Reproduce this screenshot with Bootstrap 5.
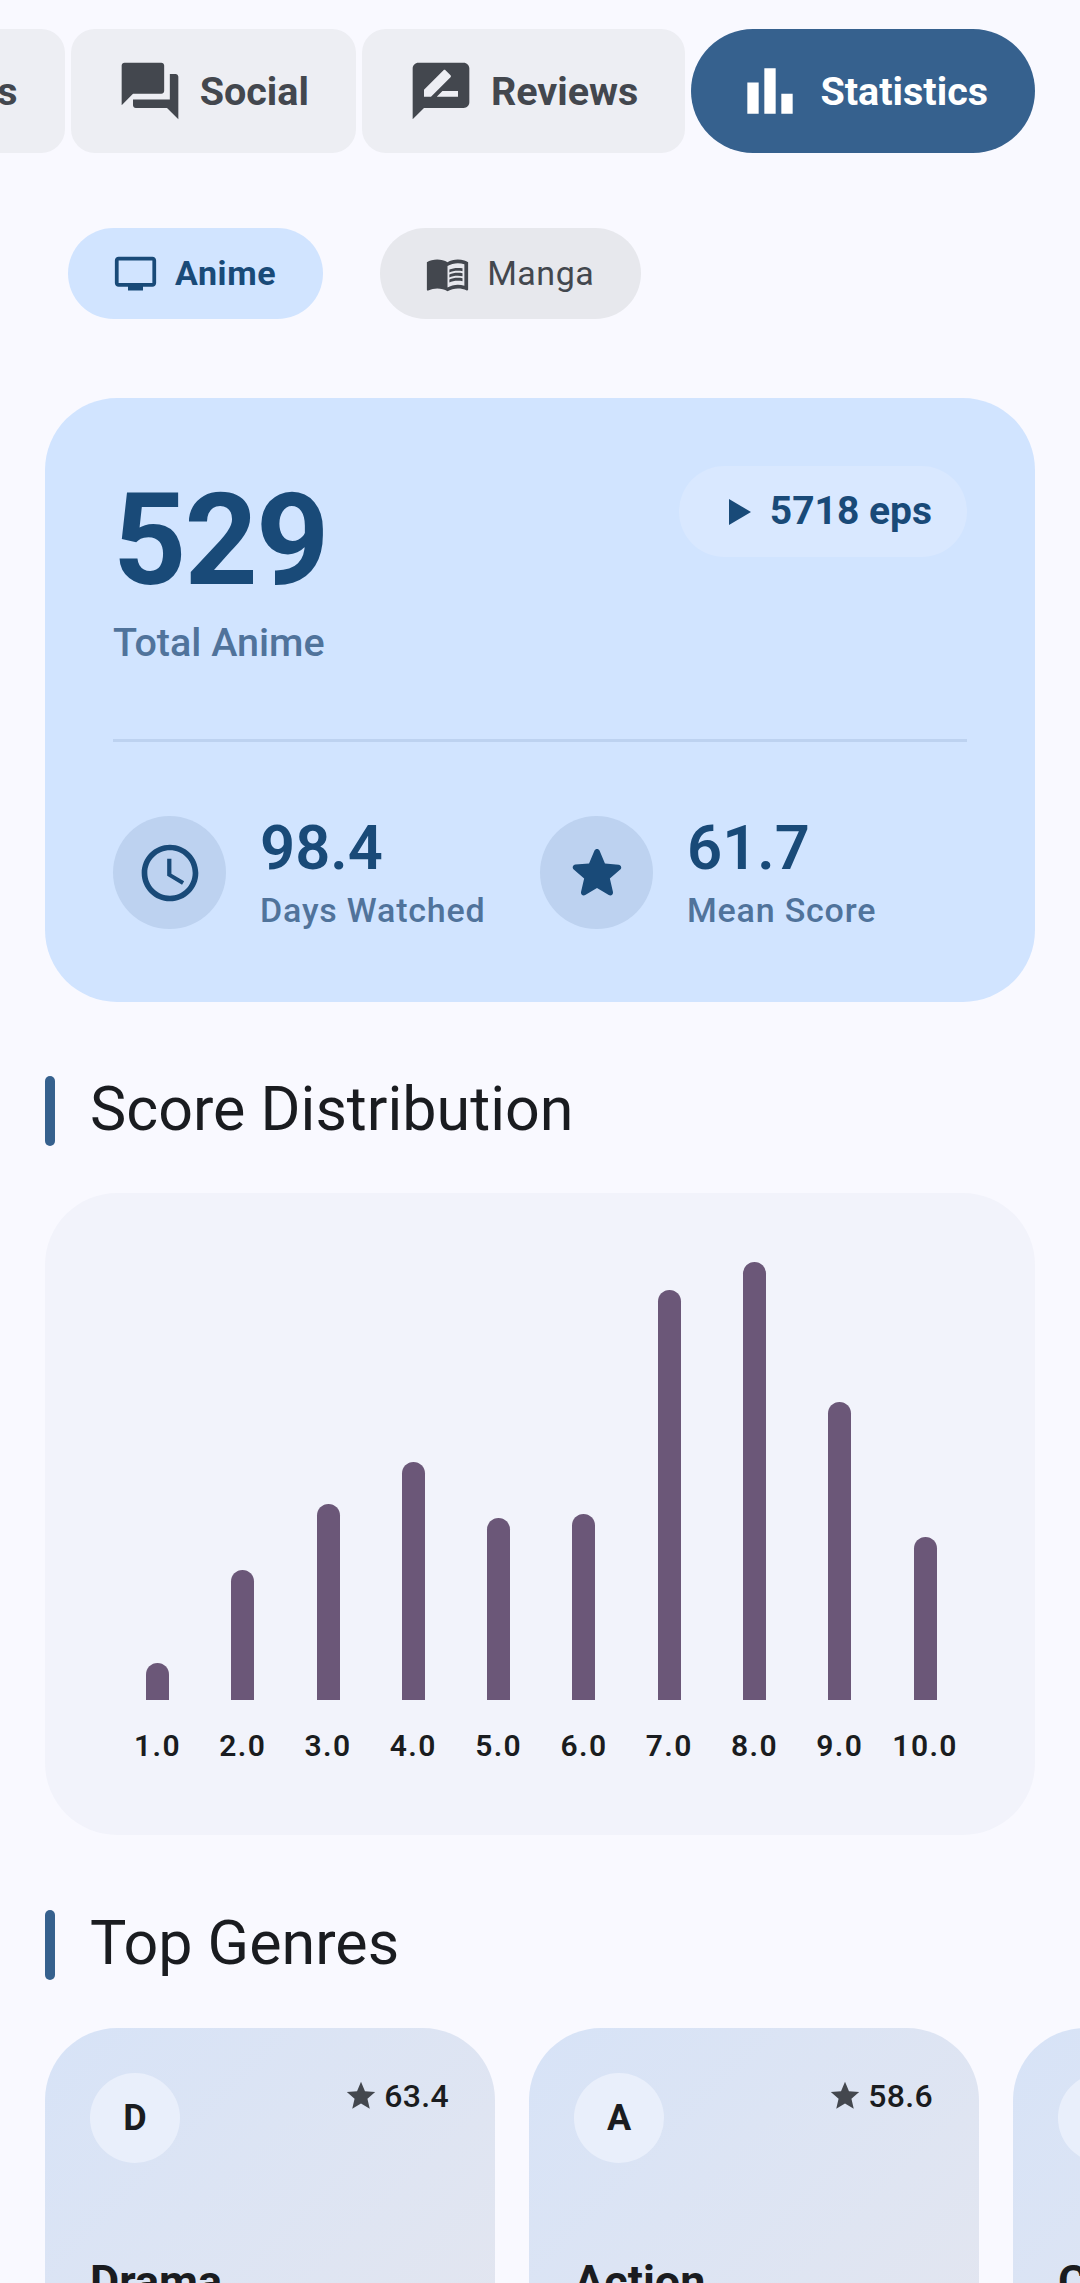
<!DOCTYPE html>
<html lang="en">
<head>
  <meta charset="UTF-8">
  <title>Statistics</title>
  <link href="https://cdn.jsdelivr.net/npm/bootstrap@5.3.3/dist/css/bootstrap.min.css" rel="stylesheet">
  <style>
    body { background: #f9f9ff; font-family: Roboto, "Liberation Sans", sans-serif; color: #1a1c20; width: 1080px; height: 2283px; overflow: hidden; }
    .tab-strip { padding: 29px 45px 0 0; gap: 6px; }
    .tab-pill { flex: none; height: 124px; border-radius: 24px; background: #edeef3; color: #43474e; font-size: 39.5px; font-weight: 700; gap: 16px; padding: 0 47px 0 45px; white-space: nowrap; }
    .tab-pill span { margin-top: 2px; }
    .tab-pill.tab-on { background: #36618e; color: #fff; border-radius: 62px; }
    .tab-pill svg { width: 68px; height: 68px; fill: currentColor; flex: none; }
    .media-row { padding: 75px 0 0 68px; gap: 57px; }
    .media-chip { height: 91px; border-radius: 46px; background: #e7e8ed; color: #43474e; font-size: 34px; letter-spacing: .5px; gap: 17px; padding: 0 47px 0 45px; }
    .media-chip.chip-on { background: #d1e4ff; color: #194a78; font-weight: 700; letter-spacing: .6px; }
    .media-chip svg { width: 45px; height: 45px; fill: currentColor; flex: none; }
    .total-panel { margin: 79px 45px 0; height: 604px; border-radius: 72px; background: #d1e4ff; padding: 68px; color: #194a78; }
    .total-num { font-size: 128px; font-weight: 700; line-height: 1; letter-spacing: -2px; margin-top: 10px; }
    .total-cap { font-size: 39.5px; font-weight: 500; color: #50739b; line-height: 40px; margin-top: 19px; }
    .eps-pill { height: 91px; border-radius: 46px; background: #d9e8ff; font-size: 39px; font-weight: 700; padding: 0 35px 0 50px; gap: 19px; }
    .total-rule { height: 3px; background: #bdd2f0; margin-top: 76px; }
    .total-stats { margin-top: 74px; gap: 35px; }
    .stat-disc { width: 113px; height: 113px; border-radius: 50%; background: #bdd2f0; flex: none; }
    .stat-item { width: 392px; gap: 34px; }
    .stat-num { font-size: 61.5px; font-weight: 600; line-height: 1; }
    .stat-cap { font-size: 34px; font-weight: 500; letter-spacing: .8px; color: #50739b; line-height: 1; margin-top: 14px; }
    .sect-head { margin: 0 45px; gap: 35px; height: 70px; }
    .sect-head::before { content: ""; width: 10px; height: 70px; border-radius: 5px; background: #36618e; }
    .sect-label { font-size: 61px; line-height: 70px; font-weight: 400; margin-top: -4px; }
    .mt-score { margin-top: 74px; }
    .mt-genre { margin-top: 75px; }
    .chart-panel { margin: 47px 45px 0; height: 642px; border-radius: 72px; background: #f2f3fb; padding: 68px 54px 0 69.8px; }
    .bar-plot { height: 439px; }
    .bar-col { width: 23px; border-radius: 12px 12px 0 0; background: #6b5778; }
    .bar-slot { width: 85.3px; flex: none; }
    .bar-name { font-size: 30px; font-weight: 600; letter-spacing: 1.4px; text-align: center; margin-top: 28px; line-height: 36px; }
    .genre-row { margin: 48px 0 0 45px; gap: 34px; }
    .genre-tile { width: 450px; height: 400px; flex: none; border-radius: 72px; padding: 45px; background: linear-gradient(135deg, #d7e3f7, #e4e6ef); }
    .genre-disc { width: 90px; height: 90px; border-radius: 50%; background: #e9effb; font-size: 36px; font-weight: 700; }
    .genre-score { font-size: 32px; font-weight: 500; letter-spacing: .3px; gap: 6px; margin-top: -1px; padding-right: 1px; }
    .genre-score svg { width: 34px; height: 34px; fill: #43474e; }
    .genre-name { font-size: 45px; font-weight: 700; margin-top: 85px; }
  </style>
</head>
<body>
  <div class="d-flex justify-content-end tab-strip">
    <div class="d-flex align-items-center tab-pill"><span>s</span></div>
    <div class="d-flex align-items-center tab-pill">
      <svg viewBox="0 0 24 24"><path d="M21 6h-2v9H6v2c0 .55.45 1 1 1h11l4 4V7c0-.55-.45-1-1-1zm-4 6V3c0-.55-.45-1-1-1H3c-.55 0-1 .45-1 1v14l4-4h10c.55 0 1-.45 1-1z"/></svg>
      <span>Social</span>
    </div>
    <div class="d-flex align-items-center tab-pill">
      <svg viewBox="0 0 24 24"><path d="M20 2H4c-1.1 0-2 .9-2 2v18l4-4h14c1.1 0 2-.9 2-2V4c0-1.1-.9-2-2-2zM6 14v-2.47l6.88-6.88c.2-.2.51-.2.71 0l1.77 1.77c.2.2.2.51 0 .71L8.47 14H6zm12 0h-7.5l2-2H18v2z"/></svg>
      <span>Reviews</span>
    </div>
    <div class="d-flex align-items-center tab-pill tab-on">
      <svg viewBox="0 0 24 24"><path d="M4 9h4v11H4zM10 4h4v16h-4zM16 13h4v7h-4z"/></svg>
      <span>Statistics</span>
    </div>
  </div>

  <div class="d-flex media-row">
    <div class="d-flex align-items-center media-chip chip-on">
      <svg viewBox="0 0 24 24"><path d="M21 3H3c-1.1 0-2 .9-2 2v12c0 1.1.9 2 2 2h5v2h8v-2h5c1.1 0 2-.9 2-2V5c0-1.1-.9-2-2-2zm0 14H3V5h18v12z"/></svg>
      Anime
    </div>
    <div class="d-flex align-items-center media-chip">
      <svg viewBox="0 0 24 24"><path d="M21 5c-1.11-.35-2.33-.5-3.5-.5-1.95 0-4.05.4-5.5 1.5-1.45-1.1-3.55-1.5-5.5-1.5S2.45 4.9 1 6v14.65c0 .25.25.5.5.5.1 0 .15-.05.25-.05C3.1 20.45 5.05 20 6.5 20c1.95 0 4.05.4 5.5 1.5 1.35-.85 3.8-1.5 5.5-1.5 1.65 0 3.35.3 4.75 1.05.1.05.15.05.25.05.25 0 .5-.25.5-.5V6c-.6-.45-1.25-.75-2-1zm0 13.5c-1.1-.35-2.3-.5-3.5-.5-1.7 0-4.15.65-5.5 1.5V8c1.35-.85 3.8-1.5 5.5-1.5 1.2 0 2.4.15 3.5.5v11.5z"/><path d="M17.5 10.5c.88 0 1.73.09 2.5.26V9.24c-.79-.15-1.64-.24-2.5-.24-1.7 0-3.24.29-4.5.83v1.66c1.13-.64 2.7-.99 4.5-.99zM13 12.49v1.66c1.13-.64 2.7-.99 4.5-.99.88 0 1.73.09 2.5.26V11.9c-.79-.15-1.64-.24-2.5-.24-1.7 0-3.24.3-4.5.83zM17.5 14.33c-1.7 0-3.24.29-4.5.83v1.66c1.13-.64 2.7-.99 4.5-.99.88 0 1.73.09 2.5.26v-1.52c-.79-.16-1.64-.24-2.5-.24z"/></svg>
      Manga
    </div>
  </div>

  <div class="total-panel">
    <div class="d-flex justify-content-between align-items-start">
      <div>
        <div class="total-num">529</div>
        <div class="total-cap">Total Anime</div>
      </div>
      <div class="d-flex align-items-center eps-pill">
        <svg width="22" height="26" viewBox="0 0 22 26" fill="currentColor"><path d="M0 0l22 13L0 26z"/></svg>
        5718 eps
      </div>
    </div>
    <div class="total-rule"></div>
    <div class="d-flex total-stats">
      <div class="d-flex align-items-center stat-item">
        <div class="d-flex align-items-center justify-content-center stat-disc">
          <svg width="68" height="68" viewBox="0 0 24 24" fill="currentColor"><path d="M11.99 2C6.47 2 2 6.48 2 12s4.47 10 9.99 10C17.52 22 22 17.52 22 12S17.52 2 11.99 2zM12 20c-4.42 0-8-3.58-8-8s3.58-8 8-8 8 3.58 8 8-3.58 8-8 8zm.5-13H11v6l5.25 3.15.75-1.23-4.5-2.67z"/></svg>
        </div>
        <div>
          <div class="stat-num">98.4</div>
          <div class="stat-cap">Days Watched</div>
        </div>
      </div>
      <div class="d-flex align-items-center stat-item">
        <div class="d-flex align-items-center justify-content-center stat-disc">
          <svg width="68" height="68" viewBox="0 0 24 24" fill="currentColor"><path d="M12 17.27l4.15 2.51c.76.46 1.69-.22 1.49-1.08l-1.1-4.72 3.67-3.18c.67-.58.31-1.68-.57-1.75l-4.83-.41-1.89-4.46c-.34-.81-1.5-.81-1.84 0L9.19 8.63l-4.83.41c-.88.07-1.24 1.17-.57 1.75l3.67 3.18-1.1 4.72c-.2.86.73 1.54 1.49 1.08l4.15-2.5z"/></svg>
        </div>
        <div>
          <div class="stat-num">61.7</div>
          <div class="stat-cap">Mean Score</div>
        </div>
      </div>
    </div>
  </div>

  <div class="d-flex align-items-center sect-head mt-score"><span class="sect-label">Score Distribution</span></div>
  <div class="chart-panel">
    <div class="d-flex bar-plot" id="plot"></div>
    <div class="d-flex" id="names"></div>
  </div>

  <div class="d-flex align-items-center sect-head mt-genre"><span class="sect-label">Top Genres</span></div>
  <div class="d-flex genre-row">
    <div class="genre-tile">
      <div class="d-flex justify-content-between align-items-start">
        <div class="d-flex align-items-center justify-content-center genre-disc">D</div>
        <div class="d-flex align-items-center genre-score"><svg viewBox="0 0 24 24"><path d="M12 17.27L18.18 21l-1.64-7.03L22 9.24l-7.19-.61L12 2 9.19 8.63 2 9.24l5.46 4.73L5.82 21z"/></svg>63.4</div>
      </div>
      <div class="genre-name">Drama</div>
    </div>
    <div class="genre-tile">
      <div class="d-flex justify-content-between align-items-start">
        <div class="d-flex align-items-center justify-content-center genre-disc">A</div>
        <div class="d-flex align-items-center genre-score"><svg viewBox="0 0 24 24"><path d="M12 17.27L18.18 21l-1.64-7.03L22 9.24l-7.19-.61L12 2 9.19 8.63 2 9.24l5.46 4.73L5.82 21z"/></svg>58.6</div>
      </div>
      <div class="genre-name">Action</div>
    </div>
    <div class="genre-tile">
      <div class="d-flex justify-content-between align-items-start">
        <div class="d-flex align-items-center justify-content-center genre-disc"></div>
      </div>
      <div class="genre-name">C</div>
    </div>
  </div>

  <script>
    // bar heights in px, bottom of plot is the baseline
    const scores = [
      ['1.0', 37], ['2.0', 130], ['3.0', 196], ['4.0', 238], ['5.0', 182],
      ['6.0', 186], ['7.0', 410], ['8.0', 438], ['9.0', 298], ['10.0', 163]
    ];
    const plot = document.getElementById('plot');
    const names = document.getElementById('names');
    scores.forEach(([name, h]) => {
      const slot = document.createElement('div');
      slot.className = 'd-flex align-items-end justify-content-center bar-slot';
      slot.innerHTML = `<div class="bar-col" style="height:${h}px"></div>`;
      plot.appendChild(slot);
      const label = document.createElement('div');
      label.className = 'bar-slot bar-name';
      label.textContent = name;
      names.appendChild(label);
    });
  </script>
</body>
</html>
